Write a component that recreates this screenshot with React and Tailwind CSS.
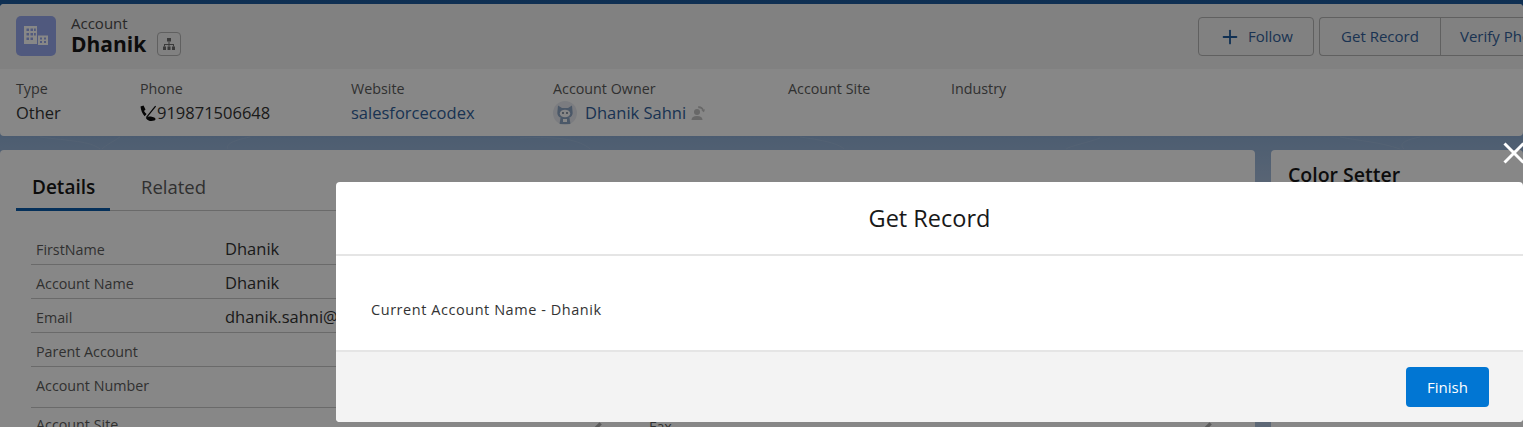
import React from "react";
import { Plus } from "lucide-react";

const font = "font-['Open_Sans','Noto_Sans',sans-serif]";

const highlights = [
  { label: "Type", value: "Other", width: "w-[124px]" },
  { label: "Phone", value: "919871506648", width: "w-[211px]", phone: true },
  { label: "Website", value: "salesforcecodex", width: "w-[202px]", link: true },
  { label: "Account Owner", value: "Dhanik Sahni", width: "w-[235px]", owner: true },
  { label: "Account Site", value: "", width: "w-[163px]" },
  { label: "Industry", value: "", width: "w-[100px]" },
];

const rows = [
  ["FirstName", "Dhanik", "h-[34px]"],
  ["Account Name", "Dhanik", "h-[34px]"],
  ["Email", "dhanik.sahni@", "h-[34px]"],
  ["Parent Account", "", "h-[34px]"],
  ["Account Number", "", "h-[41px]"],
];

function BuildingIcon() {
  return (
    <svg viewBox="0 0 40 40" className="h-10 w-10 rounded-[5px] bg-[#98a8ee]">
      <path fill="#fff" fillRule="evenodd" d="M8 10h13v18H8z M10.500 12.500v2.500h2.500v-2.500z M14.500 12.500v2.500h2.500v-2.500z M10.500 17v2.500h2.500v-2.500z M14.500 17v2.500h2.500v-2.500z M18 17v2.500h1.800v-2.500z M10.500 21.500v2.500h2.500v-2.500z M14.500 21.500v2.500h2.500v-2.500z M18 12.500v2.500h1.800v-2.500z" />
      <path fill="#fff" fillRule="evenodd" d="M22 19.500h10V29H22z M24 21.500v2h2v-2z M28 21.500v2h2v-2z M24 25v2h2v-2z M28 25v2h2v-2z" />
    </svg>
  );
}

function HierarchyIcon() {
  return (
    <svg viewBox="0 0 14 14" className="h-[14px] w-[14px]" fill="#6f6f6f">
      <path d="M5 1h4v3.500H5z" />
      <path d="M6.500 4.500h1V7h4.500v2.500h-1V8H7.500v1.500h-1V8H3v1.500H2V7h4.500z" />
      <path d="M1 9.500h3V13H1zM5.500 9.500h3V13h-3zM10 9.500h3V13h-3z" />
    </svg>
  );
}

function PhoneIcon() {
  return (
    <svg viewBox="0 0 17 17" className="h-[17px] w-[17px] shrink-0" fill="#0a0a0a">
      <path d="M.5 1.500 3.500.500l2 4-1.500 1.400c.8 1.200 1.600 2.200 2.600 3L4.700 11.200C2.400 8.800.9 5.500.5 1.500z" />
      <path d="M6 13.300c1-1.300 2.800-2 4.800-1.700l3.500 1c1.600.6 1.600 2.500 0 3-1.300.4-3 .6-4.500.3-1.500-.3-2.800-1-3.800-2.600z" />
      <path d="m5.800 12.200 9.300-11.400 1 .8L6.800 13z" />
    </svg>
  );
}

function OwnerAvatar() {
  return (
    <svg viewBox="0 0 24 24" className="h-6 w-6 shrink-0 rounded-full bg-[#e8ebf1]">
      <path fill="#8fa6c4" d="M5 4.500 9 7h6l4-2.500.6 6.500c.6 3.800-2.400 6.500-7.600 6.500S3.800 14.800 4.400 11z" />
      <ellipse cx="12" cy="12.500" rx="5.200" ry="3.800" fill="#fff" />
      <circle cx="10" cy="12" r=".9" fill="#5b6c84" />
      <circle cx="14" cy="12" r=".9" fill="#5b6c84" />
      <path fill="#8fa6c4" d="M7.500 17h9l1 6h-11z" />
      <path fill="#fff" d="M10 18h4v3h-4z" />
    </svg>
  );
}

function ChangeOwnerIcon() {
  return (
    <svg viewBox="0 0 16 16" className="h-4 w-4 shrink-0" fill="#c4c4c4">
      <circle cx="7" cy="7" r="3" />
      <path d="M1.500 15c0-2.500 2-4 5.500-4s5.500 1.500 5.500 4z" />
      <path d="M8 1.500c2.500-.6 5 .8 5.700 3.200l1.300-.4-1 3-2.700-1.700 1.200-.4C11.500 3.700 10 2.900 8.400 3.200z" />
    </svg>
  );
}

function PencilIcon() {
  return (
    <svg viewBox="0 0 12 12" className="h-3 w-3 shrink-0" fill="#adadad">
      <path d="M1 11l.7-3L8.500 1.200l2.300 2.300L4 10.300z" />
    </svg>
  );
}

export default function App() {
  return (
    <div className={`${font} relative h-[427px] w-[1523px] overflow-hidden bg-[linear-gradient(180deg,#1d5a9c_0px,#3f7bbb_60px,#93b1d6_140px,#b0c4df_200px)] pt-[4px] text-[#2b2b2b]`}>
      {/* page contour decoration */}
      <svg viewBox="0 0 1523 14" preserveAspectRatio="none" className="absolute left-0 top-[136px] h-[14px] w-full opacity-20" fill="none" stroke="#c9d8ea" strokeWidth="1">
        <path d="M40 1c30 4 50 4 60 12M120 1c-6 4-14 8-18 12M250 1c-20 4-24 8-22 12M520 2c40-2 60 2 70 11M800 1c30 4 40 8 44 12M1100 2c-10 4-30 8-34 11M1340 1c20 4 40 5 60 12M1420 1c-20 4-20 8-16 12" />
      </svg>

      {/* highlights panel */}
      <header className="relative h-[132px] overflow-hidden rounded-[4px] bg-white">
        <div className="flex h-[65px] items-start justify-between bg-[#f3f3f3] pl-4">
          <div className="flex items-center gap-[15px] pt-[11px]">
            <BuildingIcon />
            <div className="mt-[1px]">
              <div className="text-[15px] leading-[14px] text-[#4d4d4d]">Account</div>
              <div className="mt-[2px] flex items-center gap-[11px]">
                <span className="text-[21px] font-bold leading-[24px] text-[#181818]">Dhanik</span>
                <span className="flex h-6 w-6 items-center justify-center rounded-[4px] border border-[#b5b5b5]">
                  <HierarchyIcon />
                </span>
              </div>
            </div>
          </div>
          <div className="flex shrink-0 gap-[5px] whitespace-nowrap pt-[13px] text-[15px] text-[#32619b]">
            <button className="flex h-[39px] w-[116px] items-center justify-center gap-[7px] rounded-[4px] border border-[#b5b5b5]">
              <Plus size={22} strokeWidth={2} className="text-[#1f5c9e]" />
              Follow
            </button>
            <div className="flex h-[39px] w-[204px] overflow-hidden rounded-l-[4px] border border-r-0 border-[#b5b5b5]">
              <button className="w-[121px] shrink-0 border-r border-[#b5b5b5]">Get Record</button>
              <button className="pl-[19px] text-left">Verify Phone</button>
            </div>
          </div>
        </div>
        <dl className="flex pl-4 pt-[11px]">
          {highlights.map((h) => (
            <div key={h.label} className={`${h.width} shrink-0`}>
              <dt className="text-[14.3px] leading-[17px] text-[#5c5c5c]">{h.label}</dt>
              <dd className={`mt-[5px] flex h-[22px] items-center text-[16.5px] ${h.link || h.owner ? "text-[#32619b]" : "text-[#333]"}`}>
                {h.phone && <PhoneIcon />}
                {h.owner && <span className="mr-2"><OwnerAvatar /></span>}
                {h.value}
                {h.owner && <span className="ml-[4px]"><ChangeOwnerIcon /></span>}
              </dd>
            </div>
          ))}
        </dl>
      </header>

      {/* record body */}
      <main className="mt-[14px] flex gap-4">
        <section className="h-[300px] w-[1255px] shrink-0 rounded-[4px] bg-white px-4 pt-[20px]">
          <div className="flex h-[41px] items-start border-b border-[#c9c9c9] text-[18.5px]">
            <div className="h-[41px] w-[94px] border-b-[3px] border-[#0b5cab] pl-4 pt-[3px] text-[19px] font-semibold leading-[28px] text-[#181818]">Details</div>
            <div className="pl-[31px] pt-[3px] leading-[28px] text-[#5c5c5c]">Related</div>
          </div>
          <div className="mt-[20px] w-[572px] pl-[15px]">
            {rows.map(([label, value, h]) => (
              <div key={label} className={`flex ${h} border-b border-[#c9c9c9] pl-[5px] pt-[9px]`}>
                <span className="w-[189px] shrink-0 text-[14.3px] leading-[20px] text-[#5c5c5c]">{label}</span>
                <span className="-mt-[1px] text-[16.5px] leading-[20px] text-[#333]">{value}</span>
              </div>
            ))}
          </div>
          <div className="grid grid-cols-[608px_569px] pl-[20px] pt-[7px] text-[14.3px] leading-[20px] text-[#5c5c5c]">
            <div className="flex items-start justify-between pr-[41px]">
              <span>Account Site</span>
              <span className="pt-[6px]"><PencilIcon /></span>
            </div>
            <div className="flex items-start justify-between">
              <span className="pl-[5px] pt-[2px]">Fax</span>
              <span className="pt-[6px]"><PencilIcon /></span>
            </div>
          </div>
        </section>
        <aside className="h-[300px] grow rounded-[4px] bg-white pl-[17px] pt-[12px]">
          <h2 className="text-[19.5px] font-semibold leading-[26px] text-[#181818]">Color Setter</h2>
        </aside>
      </main>

      {/* dimmed backdrop */}
      <div className="absolute inset-0 bg-black/[0.47]" />

      {/* modal */}
      <button className="absolute left-[1503px] top-[142px] text-white">
        <svg viewBox="0 0 22 22" className="h-[22px] w-[22px]" stroke="currentColor" strokeWidth="3" fill="none">
          <path d="M1.500 1.500l19 19M20.500 1.500l-19 19" />
        </svg>
      </button>
      <div className="absolute left-[336px] top-[182px] flex h-[240px] w-[1187px] flex-col overflow-hidden rounded-[4px] bg-white">
        <div className="flex h-[74px] shrink-0 items-center justify-center border-b-2 border-[#e5e5e5] pt-[1px] text-[23.5px] text-[#181818]">
          Get Record
        </div>
        <div className="flex h-[94px] shrink-0 items-center pl-[35px] pt-[13px] text-[14.5px] tracking-[0.55px] text-[#333]">
          Current Account Name - Dhanik
        </div>
        <div className="flex grow items-center justify-end border-t-2 border-[#e5e5e5] bg-[#f3f3f3] pr-[34px]">
          <button className="h-10 w-[83px] rounded-[4px] bg-[#0176d3] text-[15px] text-white">Finish</button>
        </div>
      </div>
    </div>
  );
}
